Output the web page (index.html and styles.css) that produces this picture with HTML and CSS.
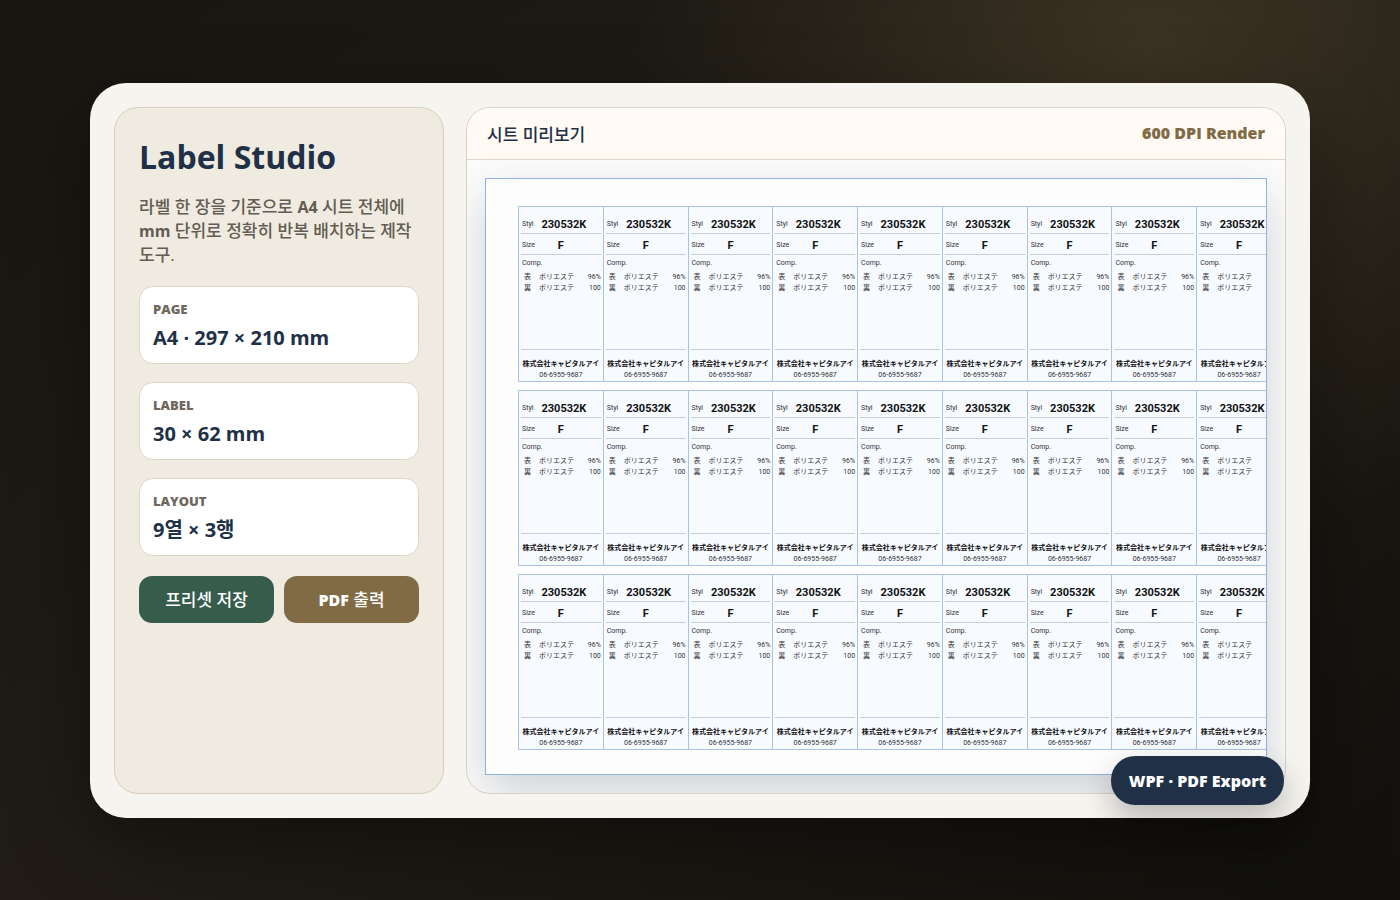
FILE: index.html
```html
<!DOCTYPE html>
<html lang="ko">
<head>
<meta charset="utf-8">
<title>Label Studio</title>
<link rel="stylesheet" href="styles.css">
</head>
<body>
<main class="window">
  <aside class="sidebar">
    <h1 class="title">Label Studio</h1>
    <p class="lead">라벨 한 장을 기준으로 <b class="latin">A4</b> 시트 전체에 <b class="latin">mm</b> 단위로 정확히 반복 배치하는 제작 도구.</p>
    <dl class="specs">
      <div class="spec"><dt class="spec-name">PAGE</dt><dd class="spec-value">A4 · 297 × 210 mm</dd></div>
      <div class="spec"><dt class="spec-name">LABEL</dt><dd class="spec-value">30 × 62 mm</dd></div>
      <div class="spec"><dt class="spec-name">LAYOUT</dt><dd class="spec-value">9열 × 3행</dd></div>
    </dl>
    <div class="actions">
      <button class="button" type="button">프리셋 저장</button>
      <button class="button button-gold" type="button"><b class="heavy">PDF</b> 출력</button>
    </div>
  </aside>
  <section class="preview">
    <header class="preview-head">
      <h2 class="preview-title">시트 미리보기</h2>
      <span class="preview-note">600 DPI Render</span>
    </header>
    <div class="preview-body">
      <div class="sheet"><div class="labels" id="labels"></div></div>
    </div>
  </section>
  <div class="badge">WPF · PDF Export</div>
</main>
<template id="label">
  <article class="label" lang="ja">
    <div class="row row-style"><span>Styl</span><b class="code">230532K</b></div>
    <div class="row row-size"><span>Size</span><b class="code">F</b></div>
    <div class="comp">
      <div class="comp-head">Comp.</div>
      <div class="fabric"><span>表</span><span>ポリエステ</span><span>96%</span></div>
      <div class="fabric"><span>裏</span><span>ポリエステ</span><span>100</span></div>
    </div>
    <footer class="maker"><b class="company">株式会社キャピタルアイ</b><span>06-6955-9687</span></footer>
  </article>
</template>
<script src="labels.js"></script>
</body>
</html>
```
FILE: labels.js
```js
const COLUMNS = 9;
const ROWS = 3;
const grid = document.getElementById('labels');
const label = document.getElementById('label');
for (let i = 0; i < COLUMNS * ROWS; i++) {
  grid.append(label.content.cloneNode(true));
}
```
FILE: styles.css
```css
* { box-sizing: border-box; margin: 0; }

body {
  min-height: 100vh;
  display: grid;
  align-items: center;
  padding: 82px 90px;
  font-family: "Open Sans", "Noto Sans CJK KR", sans-serif;
  color: #203147;
  background:
    radial-gradient(circle at 82% 5%, rgba(128, 107, 69, 0.28), transparent 36%),
    linear-gradient(145deg, #171611, #211d16 50%, #11100c);
}

.window {
  position: relative;
  display: grid;
  grid-template-columns: 330px minmax(0, 1fr);
  gap: 22px;
  padding: 24px;
  border-radius: 36px;
  background: #f6f4ef;
  box-shadow: 0 30px 80px rgba(0, 0, 0, 0.4);
}

.sidebar {
  padding: 24px;
  border: 1px solid #d8cebd;
  border-radius: 24px;
  background: #f0ebe0;
}

.title { font-size: 32px; line-height: 50px; font-weight: 700; }

.lead {
  margin: 13px 0 19px;
  font-size: 17px;
  line-height: 24px;
  font-weight: 500;
  color: #625c52;
}
.latin { font-size: 16px; font-weight: 700; }

.specs { display: grid; gap: 18px; }

.spec {
  padding: 12px 13px 10px;
  border: 1px solid #ded6c7;
  border-radius: 14px;
  background: #fff;
}

.spec-name { font-size: 13px; line-height: 20px; font-weight: 800; color: #70685d; }
.spec-value { margin-top: 4px; font-size: 20px; line-height: 30px; font-weight: 700; }

.actions {
  display: grid;
  grid-template-columns: 1fr 1fr;
  gap: 10px;
  margin-top: 20px;
}

.button {
  height: 47px;
  padding: 2px 6px 0;
  border: 0;
  border-radius: 13px;
  font: 500 17px/24px "Open Sans", "Noto Sans CJK KR", sans-serif;
  color: #fff;
  background: #365c4c;
}
.button-gold { background: #806b45; }
.heavy { font-size: 16px; font-weight: 800; }

.preview {
  overflow: hidden;
  border: 1px solid #d8d1c3;
  border-radius: 24px;
  background: #fcfcfc;
}

.preview-head {
  display: flex;
  align-items: center;
  justify-content: space-between;
  height: 52px;
  padding: 0 20px;
  border-bottom: 1px solid #ded6c7;
  background: #fffaf3;
}
.preview-title { font-size: 17px; font-weight: 500; }
.preview-note { font-size: 16px; font-weight: 800; color: #806b45; }

.preview-body { padding: 18px; }

.sheet {
  overflow: hidden;
  height: 597px;
  padding: 27px 0 0 32px;
  border: 1px solid #91b1e0;
  background: #fdfdfd;
  box-shadow: 0 18px 44px rgba(32, 38, 48, 0.2);
}

.labels {
  display: grid;
  grid-template-columns: repeat(9, 1fr);
  row-gap: 8px;
  width: 102%;
}

.label {
  display: flex;
  flex-direction: column;
  height: 176px;
  margin-right: -1px;
  padding: 7px 2px 0;
  border: 1px solid #abc3e2;
  background: #f7faff;
  font-family: Roboto, "Noto Sans CJK JP", sans-serif;
  font-size: 7px;
  line-height: 11px;
  color: #333;
}

.row {
  display: grid;
  align-items: center;
  border-bottom: 1px solid #cbcdd1;
  white-space: nowrap;
}
.row-style { height: 20px; padding: 3px 1px 0; grid-template-columns: 18px 1fr 12px; }
.row-size { height: 21px; padding: 4px 1px 0; grid-template-columns: 14px 1fr 14px; }
.code { font-size: 11px; text-align: center; color: #111; justify-self: center; }

.comp { flex: 1; padding: 3px 0 0 1px; }
.comp-head { margin-bottom: 3px; }
.fabric { display: grid; grid-template-columns: 15px 1fr auto; padding-left: 2px; white-space: nowrap; }

.maker {
  display: grid;
  height: 32px;
  padding-top: 9px;
  border-top: 1px solid #cbcdd1;
  text-align: center;
  white-space: nowrap;
}
.company { color: #111; }

.badge {
  position: absolute;
  right: 26px;
  bottom: 13px;
  padding: 13px 18px 12px;
  border-radius: 24px;
  font-size: 16px;
  line-height: 24px;
  font-weight: 800;
  color: #fff;
  background: #203147;
  box-shadow: 0 14px 32px rgba(0, 0, 0, 0.25);
}
```
